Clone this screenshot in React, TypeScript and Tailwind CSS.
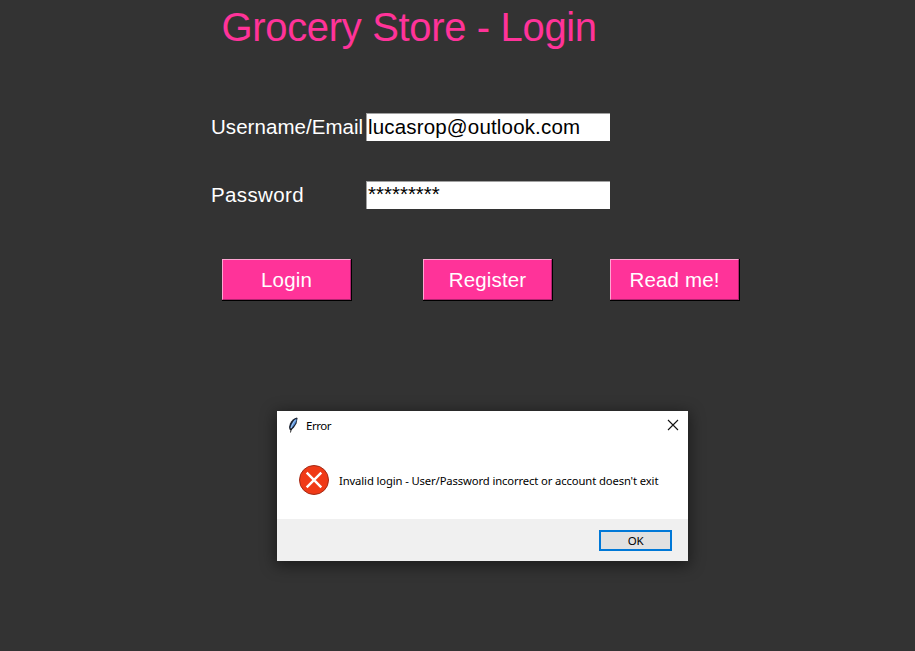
import React from "react";

const arial = "font-['Liberation_Sans',Arial,sans-serif]";
const segoe = "font-['Noto_Sans','Open_Sans',sans-serif]";

function Field({ label, labelClass, value, valueClass }: { label: string; labelClass: string; value: string; valueClass: string }) {
  return (
    <div className="flex h-7 items-center">
      <label className={`w-[155px] whitespace-nowrap text-[20.5px] leading-7 text-white ${labelClass}`}>{label}</label>
      <div className="h-7 w-[244px] border-l border-t border-[#a0a0a0] bg-white pl-px text-black">
        <span className={`block whitespace-nowrap text-[20.5px] ${valueClass}`}>{value}</span>
      </div>
    </div>
  );
}

function TkButton({ children, className = "" }: { children: React.ReactNode; className?: string }) {
  return (
    <button className={`h-[42px] w-[130px] border-b border-r border-black ${className}`}>
      <span className="flex h-full w-full items-center justify-center border border-b-[#b22370] border-l-[#ffa5d2] border-r-[#b22370] border-t-[#ffa5d2] bg-[#ff3399] pt-[2px] text-[20.5px] leading-none tracking-[0.15px] text-white">
        {children}
      </span>
    </button>
  );
}

function Feather() {
  return (
    <svg className="ml-[11px] h-4 w-[11px]" viewBox="0 0 11 16" fill="none">
      <path d="M9 .5C6 1 3.500 3.500 2 6.500L1 10L1.500 12.500L3 13.500L6 10.500L8.500 6.500L9.500 1.500Z" fill="#1b2230" />
      <path d="M8.300 1.800C6 3 3.500 6 2.300 10.800L3.500 11.300L7 7L8.500 3.500Z" fill="#5a93dc" />
      <path d="M7.500 2.800C5.300 5.500 4 8 3 11.500" stroke="#b4d3f6" strokeWidth=".8" />
      <path d="M3.300 11.500L2.500 15.500" stroke="#111" strokeWidth=".9" />
    </svg>
  );
}

function ErrorDialog() {
  return (
    <div className={`absolute left-[277px] top-[411px] flex h-[150px] w-[411px] flex-col bg-white text-black shadow-[0_3px_14px_2px_rgba(0,0,0,0.45)] ${segoe}`}>
      <div className="flex h-7 items-center">
        <Feather />
        <span className="ml-[7px] mt-[2px] text-[11.5px] tracking-[-0.45px]">Error</span>
        <svg className="ml-auto mr-[9px] h-3 w-3" viewBox="0 0 12 12" stroke="#111" strokeWidth="1.1">
          <path d="M1 1L11 11M11 1L1 11" />
        </svg>
      </div>
      <div className="flex h-20 items-center pl-[22px] pt-[2px]">
        <svg className="h-[30px] w-[30px]" viewBox="0 0 30 30" fill="none">
          <circle cx="15" cy="15" r="14.500" fill="#f03a17" stroke="#a32b16" />
          <path d="M7.700 7.700L22.300 22.300M22.300 7.700L7.700 22.300" stroke="white" strokeWidth="2.400" />
        </svg>
        <span className="ml-[10px] mt-[2px] whitespace-nowrap text-[11.25px] tracking-[-0.12px]">Invalid login - User/Password incorrect or account doesn't exit</span>
      </div>
      <div className="flex h-[42px] items-start justify-end bg-[#f0f0f0] pr-4 pt-[11px]">
        <button className="flex h-[21px] w-[73px] items-center justify-center border-2 border-[#0078d7] bg-[#e1e1e1] text-[11.5px] tracking-[-0.4px]">OK</button>
      </div>
    </div>
  );
}

export default function App() {
  return (
    <div className={`relative h-[651px] w-[915px] overflow-hidden bg-[#333333] ${arial}`}>
      <h1 className="ml-[221.5px] h-[113px] whitespace-nowrap pt-1 text-[40px] leading-[46px] tracking-[-0.34px] text-[#ff3399]">Grocery Store - Login</h1>
      <div className="ml-[211px] flex flex-col gap-10">
        <Field label="Username/Email" labelClass="tracking-[0.05px]" value="lucasrop@outlook.com" valueClass="leading-[26px] tracking-[0.17px]" />
        <Field label="Password" labelClass="tracking-[0.38px]" value="*********" valueClass="leading-[23px]" />
      </div>
      <div className="ml-[222px] mt-[50px] flex">
        <TkButton>Login</TkButton>
        <TkButton className="ml-[71px]">Register</TkButton>
        <TkButton className="ml-[57px]">Read me!</TkButton>
      </div>
      <ErrorDialog />
    </div>
  );
}
